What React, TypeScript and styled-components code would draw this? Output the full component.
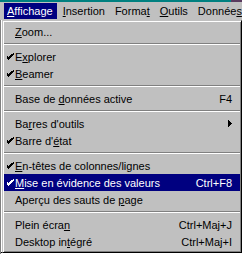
import React from "react";
import styled, { createGlobalStyle } from "styled-components";

const GlobalStyle = createGlobalStyle`
  html, body { margin: 0; padding: 0; background: #ffffff; }
  body { font-family: "Liberation Sans", Arial, sans-serif; font-size: 11px; color: #000; }
`;

const Screen = styled.div`
  width: 242px;
  height: 254px;
  overflow: hidden;
  display: flex;
  flex-direction: column;
  background: #ffffff;
`;

const TitleEdge = styled.div`
  height: 2px;
  flex: none;
  background: #008080;
  display: flex;
  justify-content: flex-end;
`;

const TitleButtonEdge = styled.div`
  width: 11px;
  background: #5a3a5e;
`;

const MenuBar = styled.div`
  height: 18px;
  flex: none;
  box-sizing: border-box;
  background: #c0c0c0;
  display: flex;
  align-items: flex-start;
  gap: 3px;
  padding: 1px 0 0 4px;
`;

const MenuTitle = styled.div<{ $open?: boolean }>`
  height: 16px;
  line-height: 16px;
  padding: 0 4px 0 3px;
  white-space: nowrap;
  background: ${(p) => (p.$open ? "#000080" : "transparent")};
  color: ${(p) => (p.$open ? "#ffffff" : "#000000")};
`;

const Key = styled.span`
  text-decoration: underline;
  text-underline-offset: 1px;
`;

const Workspace = styled.div`
  flex: 1;
  position: relative;
  display: flex;
  flex-direction: column;
  background: #ffffff;
  border-left: 1px solid #808080;
`;

const SheetFill = styled.div`
  flex: 1;
`;

const SheetRule = styled.div`
  height: 1px;
  background: #000000;
  margin-bottom: 1px;
`;

const Dropdown = styled.div`
  position: absolute;
  left: 1px;
  top: 0;
  width: 240px;
  box-sizing: border-box;
  background: #c0c0c0;
  border: 1px solid;
  border-color: #c0c0c0 #000000 #000000 #c0c0c0;
  box-shadow: inset 1px 1px #ffffff, inset -1px -1px #808080;
  padding: 2px 1px;
  display: flex;
  flex-direction: column;
`;

const Item = styled.div<{ $active?: boolean }>`
  height: 17px;
  display: flex;
  align-items: center;
  padding-right: 8px;
  white-space: nowrap;
  background: ${(p) => (p.$active ? "#000080" : "transparent")};
  color: ${(p) => (p.$active ? "#ffffff" : "#000000")};
`;

const CheckSlot = styled.span`
  width: 11px;
  flex: none;
  display: flex;
  justify-content: flex-end;
  padding-right: 1px;
  box-sizing: border-box;
`;

const Label = styled.span`
  flex: 1;
`;

const Shortcut = styled.span`
  flex: none;
`;

const Separator = styled.div`
  height: 8px;
  display: flex;
  align-items: center;
  &::before {
    content: "";
    flex: 1;
    border-top: 1px solid #808080;
    border-bottom: 1px solid #ffffff;
  }
`;

const Check = () => (
  <svg width="7" height="7" viewBox="0 0 7 7" shapeRendering="crispEdges">
    <path
      d="M6 0h1v2h-1v1h-1v1h-1v1h-1v1h-1v1h-1v-1h-1v-1h-1v-3h1v1h1v1h1v-1h1v-1h1v-1h1z"
      fill="currentColor"
    />
  </svg>
);

const Arrow = () => (
  <svg width="4" height="7" viewBox="0 0 4 7" shapeRendering="crispEdges">
    <path d="M0 0h1v1h1v1h1v1h1v1h-1v1h-1v1h-1v1h-1z" fill="currentColor" />
  </svg>
);

type Row =
  | { sep: true }
  | {
      sep?: false;
      pre: string;
      key: string;
      post: string;
      checked?: boolean;
      active?: boolean;
      shortcut?: string;
      submenu?: boolean;
    };

const rows: Row[] = [
  { pre: "", key: "Z", post: "oom..." },
  { sep: true },
  { pre: "E", key: "x", post: "plorer", checked: true },
  { pre: "", key: "B", post: "eamer", checked: true },
  { sep: true },
  { pre: "Base de ", key: "d", post: "onnées active", shortcut: "F4" },
  { sep: true },
  { pre: "Ba", key: "r", post: "res d'outils", submenu: true },
  { pre: "Barre d'", key: "é", post: "tat", checked: true },
  { sep: true },
  { pre: "", key: "E", post: "n-têtes de colonnes/lignes", checked: true },
  { pre: "", key: "M", post: "ise en évidence des valeurs", checked: true, active: true, shortcut: "Ctrl+F8" },
  { pre: "Aperçu des sauts de ", key: "p", post: "age" },
  { sep: true },
  { pre: "Plein écra", key: "n", post: "", shortcut: "Ctrl+Maj+J" },
  { pre: "Desktop in", key: "t", post: "égré", shortcut: "Ctrl+Maj+I" },
];

export default function App() {
  return (
    <>
      <GlobalStyle />
      <Screen>
        <TitleEdge>
          <TitleButtonEdge />
        </TitleEdge>
        <MenuBar>
          <MenuTitle $open>
            <Key>A</Key>ffichage
          </MenuTitle>
          <MenuTitle>
            <Key>I</Key>nsertion
          </MenuTitle>
          <MenuTitle>
            Forma<Key>t</Key>
          </MenuTitle>
          <MenuTitle>
            <Key>O</Key>utils
          </MenuTitle>
          <MenuTitle>
            Donnée<Key>s</Key>
          </MenuTitle>
        </MenuBar>
        <Workspace>
          <SheetFill />
          <SheetRule />
          <Dropdown>
            {rows.map((r, i) =>
              r.sep ? (
                <Separator key={i} />
              ) : (
                <Item key={i} $active={r.active}>
                  <CheckSlot>{r.checked ? <Check /> : null}</CheckSlot>
                  <Label>
                    {r.pre}
                    <Key>{r.key}</Key>
                    {r.post}
                  </Label>
                  {r.shortcut ? <Shortcut>{r.shortcut}</Shortcut> : null}
                  {r.submenu ? <Arrow /> : null}
                </Item>
              )
            )}
          </Dropdown>
        </Workspace>
      </Screen>
    </>
  );
}
